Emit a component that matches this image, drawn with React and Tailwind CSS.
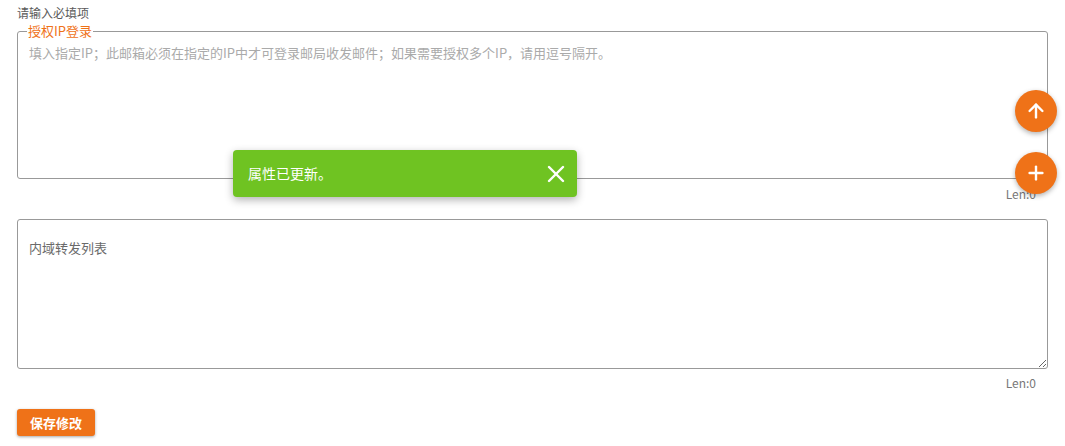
import { ArrowUp, Plus, X } from 'lucide-react'

const App = () => {
  return (
    <div
      className="relative min-h-[446px] bg-white px-[17px] pt-[5px]"
      style={{ fontFamily: '"Noto Sans CJK SC", "Noto Sans", sans-serif' }}
    >
      {/* Required hint */}
      <div className="text-[12px] leading-[16px] text-[#5a5a5a]">请输入必填项</div>

      {/* Authorised IP fieldset */}
      <fieldset className="mt-[2px] w-[1031px] rounded-[3px] border border-[#999] px-[11px]">
        <legend className="ml-[-2px] px-px text-[13px] leading-[16px] text-[#ef7218]">
          授权IP登录
        </legend>
        <textarea
          className="block h-[139px] w-full resize-none pt-[6px] text-[13px] leading-[16px] text-[#444] outline-none placeholder:text-[#aaa]"
          placeholder="填入指定IP；此邮箱必须在指定的IP中才可登录邮局收发邮件；如果需要授权多个IP，请用逗号隔开。"
        />
      </fieldset>
      <div className="mt-[7px] w-[1031px] pr-[12px] text-right text-[12px] leading-[16px] text-[#777]">
        Len:0
      </div>

      {/* Internal forwarding list */}
      <textarea
        className="mt-[17px] block h-[150px] w-[1031px] rounded-[3px] border border-[#999] px-[11px] pt-[20px] text-[13px] leading-[16px] text-[#444] outline-none placeholder:text-[#6a6a6a]"
        placeholder="内域转发列表"
      />
      <div className="mt-[6px] w-[1031px] pr-[12px] text-right text-[12px] leading-[16px] text-[#777]">
        Len:0
      </div>

      <button className="mt-[18px] h-[27px] w-[78px] rounded-[3px] bg-[#ef7218] text-[13px] font-bold text-white shadow-[0_1px_3px_rgba(0,0,0,0.35)]">
        保存修改
      </button>

      {/* Toast */}
      <div className="absolute left-[233px] top-[150px] flex h-[47px] w-[344px] items-center justify-between rounded-[4px] bg-[#6fc322] pl-[15px] pr-[7px] shadow-[0_3px_8px_rgba(0,0,0,0.3)]">
        <span className="text-[14px] text-white">属性已更新。</span>
        <X className="h-[28px] w-[28px] text-white" strokeWidth={2.1} />
      </div>

      {/* Floating buttons */}
      <div className="absolute right-[8px] top-[90px] flex flex-col gap-[20px]">
        <button className="flex h-[42px] w-[42px] items-center justify-center rounded-full bg-[#ef7218] shadow-[0_2px_5px_rgba(0,0,0,0.3)]">
          <ArrowUp className="h-[22px] w-[22px] text-white" strokeWidth={2.6} />
        </button>
        <button className="flex h-[42px] w-[42px] items-center justify-center rounded-full bg-[#ef7218] shadow-[0_2px_5px_rgba(0,0,0,0.3)]">
          <Plus className="h-[22px] w-[22px] text-white" strokeWidth={2.6} />
        </button>
      </div>
    </div>
  )
}

export default App
